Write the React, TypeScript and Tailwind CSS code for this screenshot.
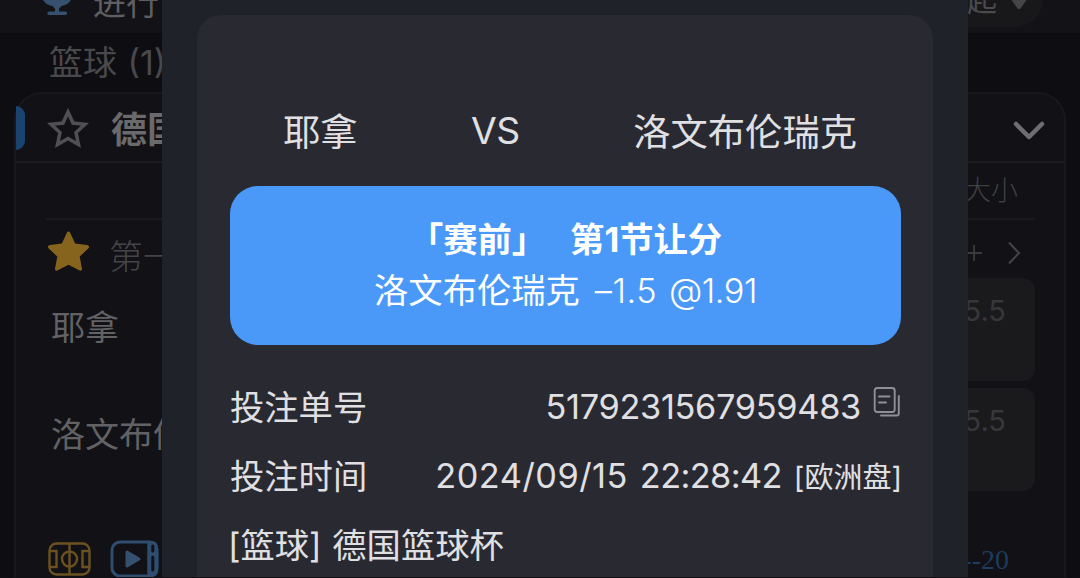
type OddsRow = {
    team: string;
    line: string;
}

const ODDS_ROWS: OddsRow[] = [
    { team: '耶拿', line: '5.5' },
    { team: '洛文布伦瑞克', line: '5.5' },
];

const STAR_PATH = 'M21 2.500c.8 0 1.300.6 1.700 1.400l4.800 10.300 11.400 1.400c2.200.3 2.900 1.900 1.400 3.400l-8.400 7.900 2.200 11.500c.4 2.100-.9 3-2.700 2L21 35l-10.400 5.400c-1.800 1-3.100.1-2.700-2l2.200-11.500L1.700 19c-1.500-1.500-.8-3.100 1.400-3.400l11.400-1.400 4.800-10.300c.4-.8.900-1.400 1.700-1.400z';

function TrophyIcon() {
    return (
        <svg width="32" height="34" viewBox="0 0 32 34" fill="#35516f">
            <path d="M5 0h22v14h4.500c-2 7-6 9-11 10l-2.500 2.500V29.500h6.500a1.700 1.700 0 0 1 0 3.400H8a1.700 1.700 0 0 1 0-3.400h6v-3L11.500 24C6.500 23 2.500 21 .5 14H5z" />
        </svg>
    )
}

function CourtIcon() {
    return (
        <svg width="44" height="36" viewBox="0 0 44 36" fill="none" stroke="#6b5120" strokeWidth="2.400">
            <rect x="1.500" y="2.500" width="40" height="31" rx="7" />
            <path d="M21.500 2.500v31M2 10h6.500v16H2M41 10h-6.500v16H41" />
            <circle cx="21.500" cy="18" r="7.500" />
        </svg>
    )
}

function VideoIcon() {
    return (
        <svg width="49" height="37" viewBox="0 0 49 37" fill="none" stroke="#2f4d6e" strokeWidth="3">
            <rect x="2" y="2" width="45" height="34" rx="8" />
            <path d="M38.500 2h2q6.500 0 6.500 7v20q0 7-6.500 7h-2z" fill="#2f4d6e" strokeWidth="2.500" />
            <path d="M42.800 6v5M42.800 17v13" stroke="#121116" strokeWidth="3" strokeLinecap="round" />
            <path d="M17 12l12 7-12 7z" fill="#35516f" stroke="#35516f" strokeLinejoin="round" />
        </svg>
    )
}

function CopyIcon() {
    return (
        <svg width="28" height="30" viewBox="0 0 28 30" fill="none" stroke="#8f8f96" strokeWidth="1.900" strokeLinecap="round" strokeLinejoin="round">
            <rect x="1.700" y="1" width="20" height="24" rx="2.500" />
            <path d="M6 9.500h10.500M6 15.500h7M25.800 9v17.500q0 2-2 2H8" />
        </svg>
    )
}

function MatchList() {
    return (
        <div className="flex h-full flex-col bg-[#0e0d11]">
            <div className="flex h-[33px] shrink-0 items-end justify-between overflow-hidden bg-[#131317] pr-[37px] pl-[41px]">
                <div className="flex h-14 shrink-0 items-end">
                    <div className="mb-[17px]"><TrophyIcon /></div>
                    <span className="mb-[10px] ml-5 text-[33px] leading-[40px] text-[#5f5f62]">进行</span>
                </div>
                <div className="mb-1.5 flex h-14 w-[120px] shrink-0 items-end justify-end rounded-b-[28px] bg-[#18181b] pr-3.5">
                    <span className="mb-0.5 text-[30px] leading-[50px] text-[#4a4a4d]">起</span>
                    <svg className="mb-4 ml-3" width="20" height="16" viewBox="0 0 20 16" fill="#454548">
                        <path d="M2 2h16q1.500 0 .5 1.500l-7 10q-1.500 1.500-3 0l-7-10Q.5 2 2 2z" />
                    </svg>
                </div>
            </div>

            <div className="h-[59px] shrink-0 pl-[49px] text-[34px] leading-[60px] text-[#49494c]">篮球 <span className="ml-px">(1)</span></div>

            <div className="mr-[14px] ml-[14px] flex flex-1 flex-col rounded-t-[28px] border-2 border-b-0 border-[#19191c] bg-[#121116]">
                <div className="flex h-[69px] shrink-0 items-center border-b-2 border-[#1b1b1e] pr-[19px]">
                    <div className="h-[44px] w-[9px] rounded-r-[9px] bg-[#1b436f]"></div>
                    <svg className="ml-[22px]" width="42" height="42" viewBox="0 0 42 42" fill="none" stroke="#505054" strokeWidth="3.500">
                        <path d="M21 5l5 11 12 1.300-9 8.200 2.500 12L21 31.500 10.500 37.500l2.500-12-9-8.200L16 16z" />
                    </svg>
                    <span className="mt-1 ml-[22px] flex-1 text-[36px] leading-[62px] font-bold text-[#6a6a6d]">德国篮球杯</span>
                    <svg className="mt-1" width="32" height="20" viewBox="0 0 32 20" fill="none" stroke="#6e6e72" strokeWidth="4.500" strokeLinecap="round" strokeLinejoin="round">
                        <path d="M3 4l13 13L29 4" />
                    </svg>
                </div>

                <div className="mr-[29px] ml-[30px] h-[57px] shrink-0 border-b-2 border-[#1b1b1e] pr-[17px] text-right text-[27px] leading-[56px] font-light text-[#404043]">大小</div>

                <div className="flex h-[58px] shrink-0 items-center pr-[43px] pl-[31px]">
                    <svg className="mt-0.5" width="43" height="43" viewBox="0 0 42 42" fill="#87641d">
                        <path d={STAR_PATH} />
                    </svg>
                    <span className="mt-4 ml-[19px] flex-1 text-[34px] leading-[58px] font-light text-[#454548]">第一节</span>
                    <svg className="mt-2" width="18" height="18" viewBox="0 0 18 18" stroke="#3b3b3e" strokeWidth="1.800">
                        <path d="M9 1v16M1 9h16" />
                    </svg>
                    <svg className="mt-2 ml-6" width="14" height="24" viewBox="0 0 14 24" fill="none" stroke="#454548" strokeWidth="2">
                        <path d="M2 1.500L12 12 2 22.500" />
                    </svg>
                </div>

                <div className="flex shrink-0 flex-col gap-[7px] pr-[29px] pl-[35px]">
                    {
                        ODDS_ROWS.map((row) =>
                            <div key={row.team} className="group flex h-[103px] justify-between">
                                <span className="text-[34px] leading-[100px] text-[#626265] group-last:leading-[93px]">{row.team}</span>
                                <div className="w-[160px] rounded-xl bg-[#1a1a1d] pr-[29px] text-right text-[29px] leading-[66px] text-[#37373a]">{row.line}</div>
                            </div>
                        )
                    }
                </div>

                <div className="flex flex-1 items-end pr-[55px] pl-[32px]">
                    <CourtIcon />
                    <div className="ml-[18px]"><VideoIcon /></div>
                    <span className="flex-1 text-right font-['Liberation_Serif',serif] text-[28px] leading-[34px] text-[#1c3c5d]">09-14--20</span>
                </div>
            </div>
        </div>
    )
}

function BetSlip() {
    return (
        <div className="absolute inset-y-0 left-[162px] w-[806px] bg-[#1f2229] pr-[35px] pl-[35px] pt-[15px]">
            <div className="h-full rounded-t-[24px] bg-[#292932] pr-8 pl-[33px] pt-[85px] text-[34px] text-[#e0e0e3]">
                <div className="flex h-[86px] pr-[44px] pl-[53px] text-[37.300px] leading-[65px] whitespace-nowrap">
                    <span className="w-[188px]">耶拿</span>
                    <span className="leading-[62px] tracking-[-0.5px]">VS</span>
                    <span className="ml-auto">洛文布伦瑞克</span>
                </div>

                <div className="h-[159px] rounded-[28px] bg-[#4a99f8] pt-[28px] text-center text-[34.300px] leading-[51px] whitespace-pre text-white">
                    <div className="flex justify-center font-bold">
                        <span>「赛前」</span>
                        <span className="ml-[24px]">第1节让分</span>
                    </div>
                    <div className="flex justify-center">
                        <span>洛文布伦瑞克</span>
                        <span className="ml-[15px] font-light tracking-[0.5px]">–1.5</span>
                        <span className="ml-3 font-light tracking-[-0.5px]">@1.91</span>
                    </div>
                </div>

                <div className="mt-[28px] flex flex-col leading-[69px]">
                    <div className="flex h-[69px] justify-between text-[34.300px]">
                        <span>投注单号</span>
                        <div className="flex">
                            <span className="-mt-px tracking-[-0.3px]">5179231567959483</span>
                            <div className="mt-[14px] ml-3"><CopyIcon /></div>
                        </div>
                    </div>
                    <div className="flex h-[69px] justify-between text-[34.300px]">
                        <span>投注时间</span>
                        <div className="-mt-px flex items-baseline">
                            <span className="tracking-[0.5px]">2024/09/15</span>
                            <span className="ml-3 tracking-[-0.6px]">22:28:42</span>
                            <span className="-mr-px ml-3 text-[29px]">[欧洲盘]</span>
                        </div>
                    </div>
                    <div className="h-[69px] text-[34.300px]"><span className="-ml-0.5">[篮球]</span> <span className="ml-px">德国篮球杯</span></div>
                </div>
            </div>
        </div>
    )
}

function App() {
    return (
        <div className="relative h-[578px] w-[1080px] overflow-hidden border-b border-[#100f14] font-[Inter,'Noto_Sans_CJK_SC',sans-serif]">
            <MatchList />
            <BetSlip />
        </div>
    )
}

export default App;
